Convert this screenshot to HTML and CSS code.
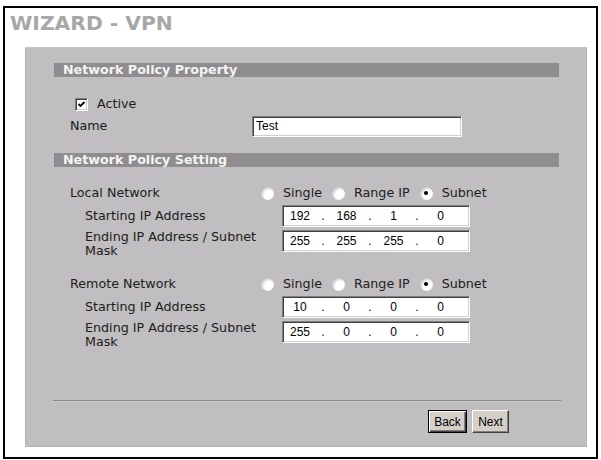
FILE: index.html
```html
<!DOCTYPE html>
<html lang="en">
<head>
  <meta charset="UTF-8">
  <title>WIZARD - VPN</title>
  <link rel="stylesheet" href="styles.css">
</head>
<body>
  <div class="frame">
    <h1 class="title">WIZARD - VPN</h1>

    <div class="panel">
      <div class="bar">Network Policy Property</div>
      <div class="row row-active">
        <span class="checkbox">
          <svg width="9" height="9" viewBox="0 0 9 9"><polyline points="1.5,4 3.5,6 7.5,2" fill="none" stroke="#000" stroke-width="1.8"/></svg>
        </span>
        <span>Active</span>
      </div>
      <div class="row row-name">
        <span class="label label-name">Name</span>
        <span class="textbox">Test</span>
      </div>

      <div class="bar bar-second">Network Policy Setting</div>

      <div class="row row-radio">
        <span class="label label-radio">Local Network</span>
        <span class="radio"></span><span class="opt">Single</span>
        <span class="radio"></span><span class="opt">Range IP</span>
        <span class="radio checked"></span><span class="opt">Subnet</span>
      </div>
      <div class="row row-sub">
        <span class="label label-sub">Starting IP Address</span>
        <span class="ipbox"><span>192</span><i>.</i><span>168</span><i>.</i><span>1</span><i>.</i><span>0</span></span>
      </div>
      <div class="row row-sub row-end">
        <span class="label label-sub">Ending IP Address / Subnet Mask</span>
        <span class="ipbox"><span>255</span><i>.</i><span>255</span><i>.</i><span>255</span><i>.</i><span>0</span></span>
      </div>

      <div class="row row-radio row-remote">
        <span class="label label-radio">Remote Network</span>
        <span class="radio"></span><span class="opt">Single</span>
        <span class="radio"></span><span class="opt">Range IP</span>
        <span class="radio checked"></span><span class="opt">Subnet</span>
      </div>
      <div class="row row-sub">
        <span class="label label-sub">Starting IP Address</span>
        <span class="ipbox"><span>10</span><i>.</i><span>0</span><i>.</i><span>0</span><i>.</i><span>0</span></span>
      </div>
      <div class="row row-sub row-end">
        <span class="label label-sub">Ending IP Address / Subnet Mask</span>
        <span class="ipbox"><span>255</span><i>.</i><span>0</span><i>.</i><span>0</span><i>.</i><span>0</span></span>
      </div>

      <div class="separator"></div>
      <div class="buttons">
        <button class="btn btn-default">Back</button>
        <button class="btn btn-next">Next</button>
      </div>
    </div>
  </div>
</body>
</html>
```

FILE: styles.css
```css
* {
  box-sizing: border-box;
}

body {
  margin: 0;
  background: #fff;
  font-family: 'DejaVu Sans', Verdana, sans-serif;
  font-size: 12.7px;
  color: #1c1c1c;
}

.frame {
  margin: 6px 0 0 3px;
  width: 595px;
  height: 453px;
  border: 2px solid #000;
}

.title {
  margin: 3px 0 0 5px;
  font-size: 20.3px;
  line-height: 24px;
  font-weight: bold;
  color: #a7a7a7;
}

.panel {
  margin: 12px 0 0 20px;
  width: 562px;
  height: 400px;
  padding: 15px 27px 0 28px;
  background: #c0bec0;
  border: 1px solid #b3b2b3;
  border-top-color: #c6c5c6;
}

.bar {
  height: 14px;
  line-height: 14px;
  padding-left: 9px;
  background: #8f8d8f;
  color: #f4f4f4;
  font-weight: bold;
  white-space: nowrap;
  overflow: hidden;
}

.bar-second {
  margin-top: 15px;
}

.row {
  display: flex;
  align-items: center;
  padding-left: 16px;
  line-height: 14px;
}

.label {
  flex: none;
}

.row-active {
  margin-top: 17px;
  height: 20px;
  padding-left: 21px;
}

.checkbox {
  width: 13px;
  height: 13px;
  margin-right: 9px;
  background: #fff;
  border: 1px solid;
  border-color: #808080 #fff #fff #808080;
  box-shadow: inset 1px 1px 0 #404040, inset -1px -1px 0 #d4d0c8;
  display: flex;
  align-items: center;
  justify-content: center;
}

.checkbox svg {
  display: block;
}

.row-name {
  height: 24px;
}

.label-name {
  width: 182px;
}

.textbox,
.ipbox {
  background: #fff;
  border: 1px solid;
  border-color: #808080 #fff #fff #808080;
  box-shadow: inset 1px 1px 0 #404040, inset -1px -1px 0 #d4d0c8;
  font-family: 'Liberation Sans', Arial, sans-serif;
  font-size: 12px;
  color: #000;
}

.textbox {
  width: 210px;
  height: 21px;
  line-height: 19px;
  padding-left: 3px;
}

.row-radio {
  margin-top: 16px;
  height: 20px;
}

.row-remote {
  margin-top: 16px;
}

.label-radio {
  width: 191px;
}

/* old style radio: white dot with a grey crescent on the top-left */
.radio {
  position: relative;
  flex: none;
  width: 13px;
  height: 13px;
  margin-right: 9px;
  border-radius: 50%;
  background: radial-gradient(circle at 62% 62%, #fff 0%, #fff 38%, #dcdcdc 62%, #8e8e8e 100%);
}

.radio.checked::after {
  content: '';
  position: absolute;
  left: 4.5px;
  top: 4.5px;
  width: 4px;
  height: 4px;
  border-radius: 50%;
  background: #000;
}

.opt {
  margin-right: 10px;
}

.row-sub {
  padding-left: 31px;
  height: 24px;
  margin-top: 1px;
}

.label-sub {
  width: 197px;
}

.row-end {
  align-items: flex-start;
  height: 30px;
  margin-top: 0;
  padding-top: 2px;
}

.ipbox {
  width: 188px;
  height: 22px;
  display: grid;
  grid-template-columns: 32px 14px 33px 14px 33px 14px 33px;
  align-items: center;
  padding-left: 1px;
}

.ipbox span,
.ipbox i {
  text-align: center;
  font-style: normal;
}

.separator {
  margin: 51px 0 0 -1px;
  width: 508px;
  border-top: 1px solid #8b8a8b;
  border-bottom: 1px solid #c9c8c9;
}

.buttons {
  display: flex;
  justify-content: flex-end;
  gap: 5px;
  margin-top: 8px;
  padding-right: 50px;
}

.btn {
  height: 23px;
  padding: 0;
  background: #d4d0c8;
  font-family: 'Liberation Sans', Arial, sans-serif;
  font-size: 12px;
  color: #000;
  border: 1px solid;
  border-color: #fff #404040 #404040 #fff;
  box-shadow: inset -1px -1px 0 #808080;
}

.btn-default {
  width: 39px;
  border: 1px solid #000;
  box-shadow: inset 1px 1px 0 #fff, inset -1px -1px 0 #404040, inset -2px -2px 0 #808080;
}

.btn-next {
  width: 37px;
}
```
